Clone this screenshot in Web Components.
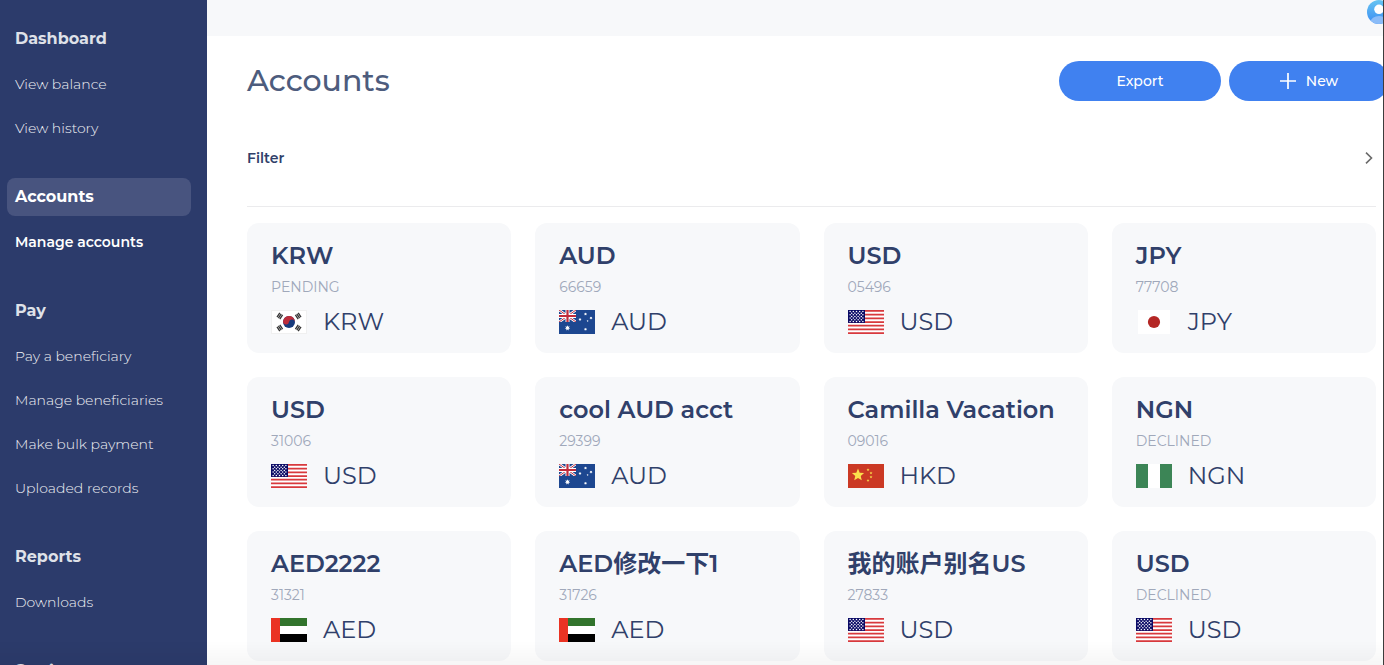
<!DOCTYPE html>
<html lang="en">
<head>
<meta charset="utf-8">
<meta name="viewport" content="width=device-width, initial-scale=1">
<title>Accounts</title>
<style>
  html, body { margin: 0; height: 100%; }
  body {
    overflow: hidden;
    background: #fff;
    font-family: Montserrat, Inter, "Noto Sans CJK SC", sans-serif;
    --navy: #2c3b6b;
    --ink: #30406a;
    --muted: #a0a8ba;
    --blue: #4081f0;
    --surface: #f7f8fa;
  }
</style>
</head>
<body>
<app-shell>
  <nav-group slot="nav" heading="Dashboard">
    <nav-item>View balance</nav-item>
    <nav-item>View history</nav-item>
  </nav-group>
  <nav-group slot="nav" heading="Accounts" active>
    <nav-item current>Manage accounts</nav-item>
  </nav-group>
  <nav-group slot="nav" heading="Pay">
    <nav-item>Pay a beneficiary</nav-item>
    <nav-item>Manage beneficiaries</nav-item>
    <nav-item>Make bulk payment</nav-item>
    <nav-item>Uploaded records</nav-item>
  </nav-group>
  <nav-group slot="nav" heading="Reports">
    <nav-item>Downloads</nav-item>
  </nav-group>
  <nav-group slot="nav" heading="Settings"></nav-group>

  <user-avatar slot="top"></user-avatar>

  <page-header>
    Accounts
    <pill-button slot="actions">Export</pill-button>
    <pill-button slot="actions" icon="plus">New</pill-button>
  </page-header>
  <filter-bar>Filter</filter-bar>
  <card-grid>
    <account-card flag="kr" currency="KRW">KRW<span slot="detail">PENDING</span></account-card>
    <account-card flag="au" currency="AUD">AUD<span slot="detail">66659</span></account-card>
    <account-card flag="us" currency="USD">USD<span slot="detail">05496</span></account-card>
    <account-card flag="jp" currency="JPY">JPY<span slot="detail">77708</span></account-card>
    <account-card flag="us" currency="USD">USD<span slot="detail">31006</span></account-card>
    <account-card flag="au" currency="AUD">cool AUD acct<span slot="detail">29399</span></account-card>
    <account-card flag="cn" currency="HKD">Camilla Vacation<span slot="detail">09016</span></account-card>
    <account-card flag="ng" currency="NGN">NGN<span slot="detail">DECLINED</span></account-card>
    <account-card flag="ae" currency="AED">AED2222<span slot="detail">31321</span></account-card>
    <account-card flag="ae" currency="AED">AED修改一下1<span slot="detail">31726</span></account-card>
    <account-card flag="us" currency="USD">我的账户别名US<span slot="detail">27833</span></account-card>
    <account-card flag="us" currency="USD">USD<span slot="detail">DECLINED</span></account-card>
  </card-grid>
</app-shell>

<script>
function define(name, template, setup) {
  customElements.define(name, class extends HTMLElement {
    constructor() {
      super();
      this.attachShadow({ mode: "open" }).innerHTML = template;
    }
    connectedCallback() {
      if (setup) setup(this, this.shadowRoot);
    }
  });
}

define("app-shell", `
  <style>
    :host { display: grid; grid-template-columns: 207px minmax(0, 1fr); height: 100vh; box-sizing: border-box; border-right: 1px solid #3c3c3c; overflow: hidden; position: relative; }
    nav { background: var(--navy); padding: 20px 16px 20px 7px; display: flex; flex-direction: column; gap: 28px; overflow: auto; scrollbar-width: none; }
    .page { display: flex; flex-direction: column; min-width: 0; min-height: 0; }
    header { background: var(--surface); height: 36px; flex: none; display: flex; justify-content: flex-end; overflow: hidden; }
    main { flex: 1; min-height: 0; padding: 25px 7px 24px 40px; overflow: hidden auto; scrollbar-width: none; }
    .fade { position: absolute; inset: auto 0 0 0; height: 24px; pointer-events: none; background: linear-gradient(rgba(0,0,0,0), rgba(0,0,0,.035)); }
  </style>
  <nav aria-label="Main"><slot name="nav"></slot></nav>
  <div class="page">
    <header><slot name="top"></slot></header>
    <main><slot></slot></main>
  </div>
  <div class="fade"></div>
`);

define("nav-group", `
  <style>
    :host { display: flex; flex-direction: column; gap: 4px; flex: none; color: #dfe1e8; }
    h2 { margin: 0; padding: 0 8px; font-size: 16px; font-weight: 700; line-height: 38px; border-radius: 8px; }
    :host([active]) h2 { background: #48547f; color: #fff; }
    div { display: flex; flex-direction: column; }
  </style>
  <h2></h2>
  <div><slot></slot></div>
`, (host, root) => { root.querySelector("h2").textContent = host.getAttribute("heading"); });

define("nav-item", `
  <style>
    :host { display: block; }
    a { display: block; padding: 0 8px; font-size: 14px; font-weight: 300; line-height: 44px; color: #f0f1f5; text-decoration: none; white-space: nowrap; }
    :host([current]) a { font-weight: 600; color: #fff; }
  </style>
  <a href="#"><slot></slot></a>
`);

define("user-avatar", `
  <style>
    :host { display: block; margin-right: -8px; }
    button { display: block; width: 24px; height: 24px; padding: 0; border: 0; background: none; }
    svg { display: block; }
  </style>
  <button aria-label="Profile">
    <svg width="24" height="24" viewBox="0 0 24 24">
      <defs>
        <linearGradient id="g" x1="0" y1="0" x2="0" y2="1"><stop offset="0" stop-color="#66c4f2"/><stop offset="1" stop-color="#3b8cf2"/></linearGradient>
        <clipPath id="c"><circle cx="12" cy="12" r="12"/></clipPath>
      </defs>
      <g clip-path="url(#c)">
        <rect width="24" height="24" fill="url(#g)"/>
        <ellipse cx="12" cy="22" rx="8.5" ry="6" fill="#8bbcf8"/>
        <circle cx="12" cy="9.3" r="4.8" fill="#fff"/>
      </g>
    </svg>
  </button>
`);

define("page-header", `
  <style>
    :host { display: flex; align-items: center; justify-content: space-between; }
    h1 { margin: 0; font-size: 30px; font-weight: 500; line-height: 40px; color: #4d5c7d; }
    .actions { display: flex; gap: 8px; margin-right: -13px; }
  </style>
  <h1><slot></slot></h1>
  <div class="actions"><slot name="actions"></slot></div>
`);

define("pill-button", `
  <style>
    :host { display: block; }
    button { display: flex; align-items: center; justify-content: center; gap: 10px; width: 162px; height: 40px; padding: 0; border: 0; border-radius: 20px; background: var(--blue); color: #fff; font-family: inherit; font-size: 14px; font-weight: 500; }
    svg { display: none; }
    :host([icon]) svg { display: block; }
    :host([icon]) button { width: 160px; }
  </style>
  <button>
    <svg width="16" height="16" viewBox="0 0 16 16" stroke="#fff" stroke-width="1.7"><path d="M8 0v16M0 8h16"/></svg>
    <span><slot></slot></span>
  </button>
`);

define("filter-bar", `
  <style>
    :host { display: block; margin: 8px 0 16px; border-bottom: 1px solid #ebebed; }
    button { display: flex; align-items: center; justify-content: space-between; width: 100%; height: 97px; padding: 0 3px 0 0; border: 0; background: none; color: var(--ink); font-family: inherit; font-size: 14px; font-weight: 600; }
  </style>
  <button aria-expanded="false">
    <span><slot></slot></span>
    <svg width="8" height="12" viewBox="0 0 8 12" fill="none" stroke="#6a6a6a" stroke-width="1.6"><path d="M1 .6 6.5 6 1 11.4"/></svg>
  </button>
`);

define("card-grid", `
  <style>
    :host { display: grid; grid-template-columns: repeat(4, minmax(0, 1fr)); gap: 24px; }
  </style>
  <slot></slot>
`);

const stars = Array.from({ length: 7 }, (_, r) =>
  Array.from({ length: r % 2 ? 4 : 5 }, (_, c) =>
    `<circle cx="${2.1 + c * 3.2 + (r % 2 ? 1.6 : 0)}" cy="${1.5 + r * 1.65}" r=".75"/>`).join("")).join("");

const star = (cx, cy, R, turn = -90, n = 5, k = 0.4) =>
  `<polygon points="${Array.from({ length: n * 2 }, (_, i) => {
    const a = (turn + i * 180 / n) * Math.PI / 180, q = i % 2 ? R * k : R;
    return (cx + q * Math.cos(a)).toFixed(2) + "," + (cy + q * Math.sin(a)).toFixed(2);
  }).join(" ")}"/>`;

const trigram = (x, y, turn) =>
  `<path transform="translate(${x} ${y}) rotate(${turn})" d="M-2.5-1.7H2.5M-2.5 0H2.5M-2.5 1.7H2.5"/>`;

const flags = {
  kr: `<rect x=".5" y=".5" width="35" height="23" fill="#fff" stroke="#f0f0f0"/>
    <circle cx="18" cy="12" r="6" fill="#173a7c"/>
    <path transform="rotate(10 18 12)" d="M12 12a6 6 0 0 1 12 0a3 3 0 0 0-6 0a3 3 0 0 1-6 0z" fill="#bd2c3a"/>
    <g stroke="#333" stroke-width="1.3">${trigram(8.8, 6, -56)}${trigram(27.2, 6, 56)}${trigram(8.8, 18, 56)}${trigram(27.2, 18, -56)}</g>`,
  au: `<rect width="36" height="24" fill="#1d4790"/>
    <svg width="17" height="12" viewBox="0 0 17 12"><path d="M0 0 17 12M17 0 0 12" stroke="#fff" stroke-width="2.6"/><path d="M0 0 17 12M17 0 0 12" stroke="#c33242" stroke-width="1"/>
    <path d="M8.5 0v12M0 6h17" stroke="#fff" stroke-width="4"/><path d="M8.5 0v12M0 6h17" stroke="#c02c3c" stroke-width="2.2"/></svg>
    <g fill="#fff">${star(8.5, 18, 2.8, -90, 7, .5)}${star(26.5, 4, 1.6, -90, 7, .5)}${star(21, 9.5, 1.6, -90, 7, .5)}${star(32, 8, 1.6, -90, 7, .5)}${star(28.6, 11, 1, -90, 5, .5)}${star(26.5, 19.3, 1.6, -90, 7, .5)}</g>`,
  us: `<rect width="36" height="24" fill="#fff"/>
    <path d="${Array.from({ length: 7 }, (_, i) => `M0 ${(i * 2 + .5) * 24 / 13}H36`).join("")}" stroke="#d8393d" stroke-width="1.75"/>
    <rect width="17" height="12.9" fill="#0b0b66"/><g fill="#fff">${stars}</g>`,
  jp: `<rect x="2" width="32" height="24" fill="#fff"/><circle cx="18" cy="12" r="6.1" fill="#b42725"/>`,
  cn: `<rect width="36" height="24" fill="#cb3924"/><g fill="#fbdf4c">${star(10, 11, 6.4, -90, 5, .45)}${star(20, 5.8, 1.6)}${star(23, 9, 1.6)}${star(23, 13, 1.6)}${star(20, 16.4, 1.6)}</g>`,
  ng: `<rect width="36" height="24" fill="#fff"/><path d="M0 0h12v24H0zM24 0h12v24H24z" fill="#3c8556"/>`,
  ae: `<rect width="36" height="24" fill="#fff"/><path d="M9 0h27v8H9z" fill="#32742c"/><path d="M9 16h27v8H9z" fill="#000"/><path d="M0 0h9v24H0z" fill="#ea3323"/>`
};

define("currency-flag", `
  <style>
    :host { display: block; flex: none; }
    svg { display: block; }
  </style>
  <svg width="36" height="24" viewBox="0 0 36 24" aria-hidden="true"></svg>
`, (host, root) => { root.querySelector("svg").innerHTML = flags[host.getAttribute("code")] || ""; });

define("account-card", `
  <style>
    :host { display: flex; flex-direction: column; gap: 4px; padding: 17px 24px 12px; border-radius: 12px; background: var(--surface); color: var(--ink); }
    h3 { margin: 0; font-size: 24px; font-weight: 600; line-height: 32px; white-space: nowrap; }
    .detail { font-size: 14px; line-height: 23px; color: var(--muted); }
    .currency { display: flex; align-items: center; gap: 16px; font-size: 24px; font-weight: 400; line-height: 38px; }
  </style>
  <h3><slot></slot></h3>
  <div class="detail"><slot name="detail"></slot></div>
  <div class="currency"></div>
`, (host, root) => {
  const flag = document.createElement("currency-flag");
  flag.setAttribute("code", host.getAttribute("flag"));
  const code = document.createElement("span");
  code.textContent = host.getAttribute("currency");
  root.querySelector(".currency").replaceChildren(flag, code);
});
</script>
</body>
</html>
